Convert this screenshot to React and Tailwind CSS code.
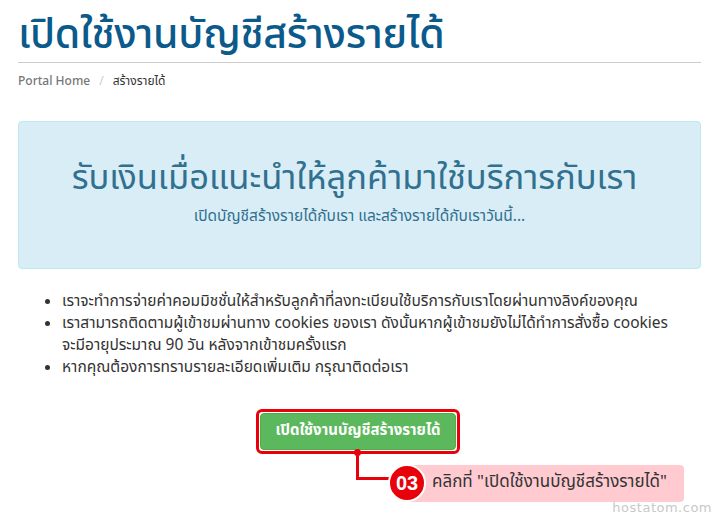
export default function App() {
  const font = { fontFamily: '"Noto Sans Thai", "Noto Sans", "Liberation Sans", sans-serif' };
  return (
    <div className="w-[720px] h-[517px] bg-white relative overflow-hidden" style={font}>
      <div className="px-[18px] pt-[9px]">
        <h1 className="text-[41px] leading-[52px] text-[#0b5a8c] font-medium tracking-[-0.3px]">เปิดใช้งานบัญชีสร้างรายได้</h1>
        <div className="mt-[1px] h-px bg-[#cccccc] w-[683px]"></div>
        <div className="mt-[9px] text-[12px] flex items-center gap-[9px]">
          <span className="text-[#777777] font-medium">Portal Home</span>
          <span className="text-[#cccccc]">/</span>
          <span className="text-[#333333]">สร้างรายได้</span>
        </div>
        <div className="mt-[31px] w-[683px] h-[148px] bg-[#d9edf7] border border-[#bce8f1] rounded-[4px] flex flex-col items-center justify-center">
          <div className="text-[34.5px] text-[#31708f] leading-[44px] mt-[-4px] mr-[10px]">รับเงินเมื่อแนะนำให้ลูกค้ามาใช้บริการกับเรา</div>
          <div className="text-[15.5px] text-[#31708f] mt-[4px]">เปิดบัญชีสร้างรายได้กับเรา และสร้างรายได้กับเราวันนี้...</div>
        </div>
        <ul className="mt-[22px] pl-[44px] pr-[18px] list-disc text-[15.5px] leading-[22px] text-[#333333]">
          <li>เราจะทำการจ่ายค่าคอมมิชชั่นให้สำหรับลูกค้าที่ลงทะเบียนใช้บริการกับเราโดยผ่านทางลิงค์ของคุณ</li>
          <li>เราสามารถติดตามผู้เข้าชมผ่านทาง cookies ของเรา ดังนั้นหากผู้เข้าชมยังไม่ได้ทำการสั่งซื้อ cookies จะมีอายุประมาณ 90 วัน หลังจากเข้าชมครั้งแรก</li>
          <li>หากคุณต้องการทราบรายละเอียดเพิ่มเติม กรุณาติดต่อเรา</li>
        </ul>
        <div className="mt-[30px] flex justify-center">
          <div className="border-[3px] border-[#e8000b] rounded-[6px] p-[1px] ml-[-4px]">
            <button className="bg-[#5cb85c] text-white font-bold text-[15px] rounded-[4px] px-[14px] h-[37px] border border-[#4cae4c]">เปิดใช้งานบัญชีสร้างรายได้</button>
          </div>
        </div>
      </div>
      <div className="absolute left-[354px] top-[449px] flex items-start">
        <div className="flex flex-col items-start">
          <div className="w-[7px] h-[7px] rounded-full bg-[#e8000b]"></div>
          <div className="w-[40px] h-[27px] ml-[2px] mt-[-3px] border-l-[3px] border-b-[3px] border-[#e8000b]"></div>
        </div>
        <div className="flex items-center ml-[-8px] mt-[15px]">
          <div className="relative z-10 w-[38px] h-[38px] rounded-full bg-[#e8000b] border-[2px] border-white flex items-center justify-center text-white font-bold text-[20px]" style={{fontFamily: '"Liberation Sans", sans-serif'}}>03</div>
          <div className="ml-[-26px] w-[284px] h-[37px] bg-[#ffcbd1] rounded-[4px] flex items-center pl-[32px] text-[17px] text-[#333333]">คลิกที่ "เปิดใช้งานบัญชีสร้างรายได้"</div>
        </div>
      </div>
      <div className="absolute right-[8px] bottom-[0px] text-[13px] text-[#c8c8c8] tracking-[0.5px]" style={{fontFamily: '"DejaVu Sans", sans-serif'}}>hostatom.com</div>
    </div>
  );
}
